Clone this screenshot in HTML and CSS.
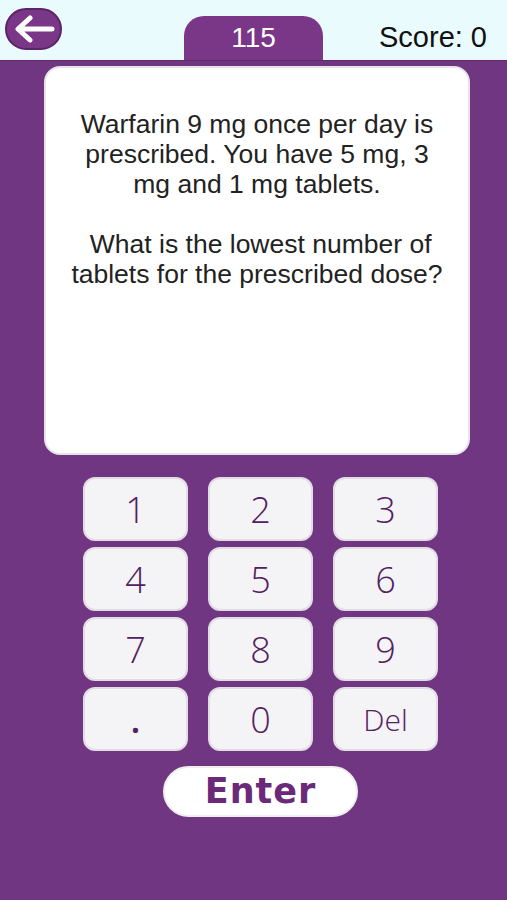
FILE: index.html
```html
<!DOCTYPE html>
<html lang="en">
<head>
    <meta charset="utf-8">
    <title>Dose Quiz</title>
    <link rel="stylesheet" href="styles.css">
</head>
<body>
    <header class="topbar">
        <div class="topbar-left">
            <button class="back-btn" type="button" aria-label="Back">
                <svg width="44" height="28" viewBox="0 0 44 28">
                    <path d="M40 14 H7 M18 3 L6 14 L18 25" fill="none" stroke="#fff" stroke-width="5" stroke-linecap="round" stroke-linejoin="round"/>
                </svg>
            </button>
        </div>
        <div class="q-tab">115</div>
        <div class="score">Score: 0</div>
    </header>

    <main class="board">
        <section class="card">
            <p class="question">Warfarin 9 mg once per day is prescribed. You have 5 mg, 3 mg and 1 mg tablets.

 What is the lowest number of tablets for the prescribed dose?</p>
        </section>

        <div class="keypad">
            <button class="key" type="button">1</button>
            <button class="key" type="button">2</button>
            <button class="key" type="button">3</button>
            <button class="key" type="button">4</button>
            <button class="key" type="button">5</button>
            <button class="key" type="button">6</button>
            <button class="key" type="button">7</button>
            <button class="key" type="button">8</button>
            <button class="key" type="button">9</button>
            <button class="key key-dot" type="button">.</button>
            <button class="key" type="button">0</button>
            <button class="key key-del" type="button">Del</button>
        </div>

        <div class="enter-row">
            <button class="enter-btn" type="button">Enter</button>
        </div>
    </main>
</body>
</html>
```

FILE: styles.css
```css
html, body {margin:0; padding:0;}
body {background:#703681; height:900px; overflow:hidden; font-family:"Liberation Sans", Arial, sans-serif;}

.topbar {height:60px; background:#e9fbfc; display:grid; grid-template-columns:1fr 139px 1fr; align-items:end;}
.topbar-left {align-self:start; padding:8px 0 0 5px;}
.back-btn {width:57px; height:42px; border-radius:21px; background:#7a3687; border:2px solid #5c2468; display:flex; align-items:center; justify-content:center; padding:0; box-sizing:border-box;}
.q-tab {height:44px; background:#7a3687; border-radius:20px 20px 0 0; color:#fff; font-size:28px; text-align:center; line-height:44px;}
.score {align-self:start; padding:20px 20px 0 0; text-align:right; font-size:29px; line-height:34px; color:#111;}

.board {padding-top:5px; border-top:1px solid #5e2a6c;}
.card {margin-left:44px; width:426px; height:389px; box-sizing:border-box; background:#fff; border:2px solid #e8e2ea; border-radius:16px; padding:41px 22px 0;}
.question {margin:0; font-size:26.5px; line-height:30px; color:#222; text-align:center; white-space:pre-wrap;}

.keypad {margin:22px 0 0 83px; display:grid; grid-template-columns:repeat(3, 105px); grid-auto-rows:64px; column-gap:20px; row-gap:6px;}
.key {background:#f4f3f5; border:2px solid #e2dce4; border-radius:12px; color:#52205f; font-family:"Open Sans", sans-serif; font-weight:300; font-size:36px; padding:0;}
.key-dot {font-weight:600;}
.key-del {font-size:30px;}

.enter-row {margin:15px 0 0 163px;}
.enter-btn {width:195px; height:51px; border-radius:26px; background:#fff; border:2px solid #eee; color:#6a2a79; font-family:"DejaVu Sans", sans-serif; font-weight:bold; font-size:35px; letter-spacing:1px; padding:0; line-height:47px;}
```
